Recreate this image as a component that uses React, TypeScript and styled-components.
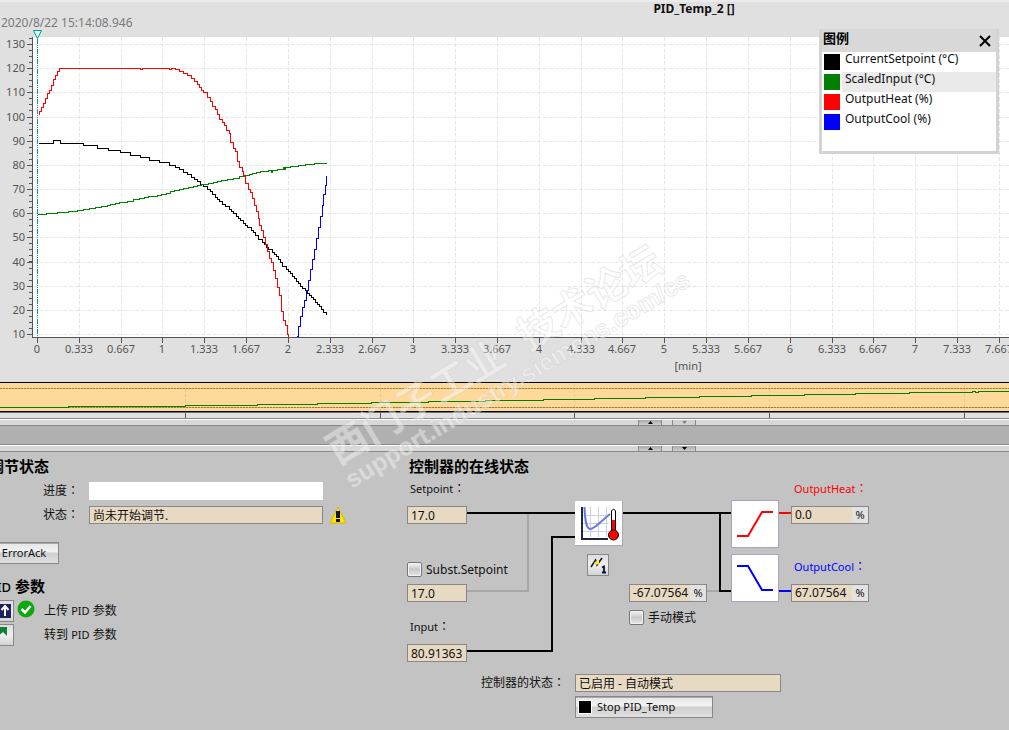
import React, { useState } from 'react';
import styled, { createGlobalStyle, css } from 'styled-components';

const latin = '"Noto Sans", "Open Sans", "Noto Sans CJK SC", sans-serif';
const lineGrey = '#888888';
const sand = '#e8d9c2';

const GlobalStyle = createGlobalStyle`
  *, *::before, *::after { box-sizing: border-box; }
  body {
    margin: 0;
    background: #c3c3c3;
    font-family: ${latin};
    font-size: 11px;
    line-height: 18px;
    color: #111;
    overflow-x: hidden;
  }
  button, input { font: inherit; color: inherit; }
`;

const Page = styled.main`
  position: relative;
  display: flex;
  flex-direction: column;
  min-height: 100vh;
  overflow: hidden;
`;

/* ---------- trend view ---------- */

const Trend = styled.section`
  position: relative;
  background: #e0e0e0;
  border-top: 2px solid #ebebeb;
`;

const TrendTitle = styled.h1`
  margin: 0;
  padding-left: 379px;
  height: 14px;
  font-size: 12px;
  line-height: 14px;
  font-weight: 700;
  text-align: center;
`;

const TimeStamp = styled.time`
  display: block;
  height: 14px;
  padding-left: 1px;
  font-size: 12px;
  line-height: 14px;
  color: #7a7a7a;
`;

const Plot = styled.svg`
  display: block;
  width: 100%;
  height: 328px;
  font-size: 11px;
  fill: #555;
  overflow: hidden;
`;

const AxisUnit = styled.div`
  height: 24px;
  padding-left: 367px;
  text-align: center;
  line-height: 16px;
  color: #555;
`;

const Legend = styled.aside`
  position: absolute;
  top: 27px;
  right: 10px;
  width: 180px;
  height: 125px;
  border: 3px solid #d3d3d3;
  border-top-width: 0;
  background: #fff;
`;

const LegendHeader = styled.header`
  display: flex;
  justify-content: space-between;
  align-items: flex-start;
  height: 23px;
  padding: 0 5px 0 1px;
  background: #d8d8d8;
`;

const LegendTitle = styled.h2`
  margin: 0;
  font-family: "Noto Sans CJK SC", sans-serif;
  font-size: 13px;
  line-height: 18px;
  font-weight: 700;
  color: #000;
`;

const CloseButton = styled.button`
  display: flex;
  padding: 6px 0 0;
  border: 0;
  background: none;
`;

const LegendList = styled.ul`
  margin: 0;
  padding: 0;
  list-style: none;
`;

const LegendRow = styled.li<{ $active?: boolean }>`
  display: flex;
  gap: 2px;
  height: 20px;
  padding-left: 2px;
  > span {
    flex: 1;
    padding-left: 3px;
    font-size: 12px;
    line-height: 14px;
    background: ${(p) => (p.$active ? '#eaeaea' : 'transparent')};
  }
`;

const Swatch = styled.i<{ $color: string }>`
  width: 16px;
  height: 16px;
  margin-top: 2px;
  background: ${(p) => p.$color};
`;

const Overview = styled.svg`
  display: block;
  width: 100%;
  height: 36px;
`;

/* ---------- splitters ---------- */

const Splitter = styled.div`
  display: flex;
  justify-content: center;
  gap: 10px;
  height: 8px;
  padding-left: 325px;
  border-top: 1px solid ${lineGrey};
  border-bottom: 1px solid ${lineGrey};
  background: #d8d8d8;
  box-shadow: inset 0 1px 0 #fff;
`;

const SplitterButton = styled.button`
  display: flex;
  align-items: center;
  justify-content: center;
  width: 24px;
  height: 5px;
  margin-top: 1px;
  padding: 0;
  border: solid ${lineGrey};
  border-width: 0 1px;
  background: linear-gradient(#a8a8a8, #d0d0d0);
  &:disabled { background: #d2d2d2; }
`;

const Band = styled.div`
  height: 18px;
  background: #b0b0b0;
`;

/* ---------- lower pane ---------- */

const Lower = styled.section`
  flex: 1;
  display: grid;
  grid-template-columns: 400px 1fr;
  align-items: start;
  padding: 4px 0 12px;
  background: #c3c3c3;
`;

const Tuning = styled.div`
  margin-left: -11px;
`;

const Heading = styled.h2<{ $indent?: number; $top?: number }>`
  margin: ${(p) => p.$top ?? 0}px 0 0;
  padding-left: ${(p) => p.$indent ?? 0}px;
  font-family: "Noto Sans", "Noto Sans CJK SC", sans-serif;
  font-size: 15px;
  line-height: 20px;
  height: 20px;
  font-weight: 700;
  color: #000;
  white-space: nowrap;
`;

const HeadingLatin = styled.span`
  font-size: 13px;
  font-weight: 500;
`;

const FormRow = styled.div`
  display: grid;
  grid-template-columns: 100px 234px auto;
  align-items: center;
  height: 18px;
  margin-top: 6px;
`;

const caption = css`
  font-family: "Noto Sans", "Noto Sans CJK SC", sans-serif;
  white-space: nowrap;
`;

const RowLabel = styled.label`
  ${caption}
  padding-left: 54px;
  font-size: 12px;
`;

const ColonMark = styled.span`
  font-family: "Noto Sans CJK TC", sans-serif;
  font-size: 12px;
  line-height: 12px;
`;

const Progress = styled.progress`
  appearance: none;
  display: block;
  width: 100%;
  height: 18px;
  border: 0;
  background: #fff;
  &::-webkit-progress-bar { background: #fff; }
  &::-webkit-progress-value { background: #0a8f0a; }
`;

const Field = styled.input`
  display: block;
  width: 100%;
  min-width: 0;
  height: 18px;
  padding: 0 3px;
  border: 1px solid ${lineGrey};
  border-radius: 0;
  outline: 0;
  background: ${sand};
  font-size: 12px;
  line-height: 16px;
`;

const UnitField = styled.div`
  display: flex;
  width: 78px;
  height: 18px;
  border: 1px solid ${lineGrey};
  background: #e2e2e2;
  ${Field} {
    height: 16px;
    padding-right: 0;
    border: 0;
  }
`;

const Unit = styled.span`
  flex: none;
  width: 16px;
  text-align: center;
  line-height: 16px;
`;

const Warning = styled.svg`
  margin-left: 6px;
`;

const PushButton = styled.button<{ $width: number; $top?: number }>`
  display: flex;
  align-items: center;
  justify-content: ${(p) => (p.$top ? 'center' : 'flex-start')};
  gap: 5px;
  width: ${(p) => p.$width}px;
  height: 22px;
  margin-top: ${(p) => p.$top ?? 0}px;
  padding: 0 2px;
  border: 1px solid ${lineGrey};
  background: linear-gradient(#e6e6e6 0%, #f2f2f2 45%, #cfcfcf 50%, #e0e0e0 100%);
  box-shadow: inset 0 1px 0 #a8a8a8;
  color: #111;
  line-height: 20px;
`;

const Actions = styled.div`
  display: grid;
  grid-template-columns: 25px 30px auto;
  align-items: center;
  row-gap: 2px;
  margin-top: 4px;
`;

const IconButton = styled.button`
  display: flex;
  align-items: center;
  justify-content: center;
  width: 100%;
  height: 22px;
  padding: 0;
  border: 1px solid ${lineGrey};
  background: linear-gradient(#dcdcdc, #f0f0f0 50%, #d2d2d2);
`;

const OkMark = styled.svg`
  align-self: start;
  justify-self: start;
  margin-left: 3px;
`;

const ActionText = styled.span`
  ${caption}
  font-size: 12px;
`;

const ActionLatin = styled.span`
  font-size: 11px;
`;

/* ---------- controller diagram ---------- */

const Diagram = styled.div`
  position: relative;
  height: 192px;
`;

const Wires = styled.svg`
  position: absolute;
  left: 0;
  top: 0;
`;

const Node = styled.div<{ $x: number; $y: number; $w?: number; $color?: string }>`
  position: absolute;
  left: ${(p) => p.$x}px;
  top: ${(p) => p.$y}px;
  width: ${(p) => (p.$w ? `${p.$w}px` : 'auto')};
  white-space: nowrap;
  color: ${(p) => p.$color ?? 'inherit'};
`;

const Block = styled.svg`
  display: block;
  background: #fff;
`;

const Check = styled.label`
  display: flex;
  align-items: center;
  gap: 4px;
  height: 15px;
  font-size: 12px;
  line-height: 14px;
`;

const CheckBox = styled.input`
  appearance: none;
  width: 15px;
  height: 15px;
  margin: 0;
  border: 1px solid #777;
  border-radius: 2px;
  background: linear-gradient(#f4f4f4, #c8c8c8 50%, #e8e8e8);
  box-shadow: inset 0 0 0 1px #f2f2f2;
  &:checked { background: #555; }
`;

const StatusGrid = styled.div`
  display: grid;
  grid-template-columns: 175px 206px;
  row-gap: 4px;
  margin-top: 6px;
`;

const StatusLabel = styled.label`
  ${caption}
  font-size: 12px;
  padding-left: 81px;
`;

const StopCell = styled.div`
  grid-column: 2;
`;

const Watermark = styled.div`
  position: absolute;
  left: 337px;
  top: 432px;
  transform: rotate(-31deg);
  transform-origin: 0 50%;
  pointer-events: none;
  white-space: nowrap;
  font-family: "Liberation Sans", "Noto Sans CJK SC", sans-serif;
  font-weight: 700;
  color: rgba(255, 255, 255, 0.42);
  -webkit-text-stroke: 1px rgba(205, 205, 205, 0.45);
`;

const MarkLine = styled.div<{ $size: number }>`
  font-size: ${(p) => p.$size}px;
  line-height: ${(p) => p.$size}px;
`;

/* ---------- data ---------- */

type Pt = [number, number];

// Points are screen positions inside the plot; the value is held until the next sample.
const stairs = (pts: Pt[]) =>
  pts.reduce((d, [x, y], i) => (i === 0 ? `M${x} ${y}` : `${d}H${x}V${y}`), '');

const heat: Pt[] = [
  [38, 114], [39, 111], [41, 107], [43, 103], [45, 98], [47, 93], [49, 90], [51, 85], [53, 79],
  [55, 75], [57, 71], [59, 68], [140, 69], [142, 68], [169, 69], [171, 68], [175, 69], [179, 71], [183, 73],
  [187, 75], [191, 78], [194, 81], [197, 84], [199, 87], [201, 90], [203, 92], [207, 97], [210, 101],
  [212, 106], [215, 109], [217, 114], [219, 119], [222, 122], [224, 125], [226, 130], [229, 133],
  [230, 142], [233, 148], [235, 151], [237, 161], [239, 167], [242, 171], [243, 175], [245, 183],
  [248, 189], [250, 192], [252, 198], [254, 205], [256, 211], [258, 218], [259, 225], [261, 230],
  [263, 237], [265, 244], [267, 251], [269, 258], [271, 262], [273, 270], [275, 278], [277, 287],
  [279, 295], [281, 311], [283, 320], [285, 325], [287, 334], [288, 337],
];
const cool: Pt[] = [
  [296, 336], [298, 326], [300, 316], [302, 307], [304, 300], [306, 290], [308, 280], [310, 269],
  [312, 259], [314, 249], [316, 238], [318, 227], [320, 216], [322, 205], [323, 194], [325, 185], [326, 175],
];
const setpoint: Pt[] = [
  [38, 143], [53, 140], [60, 143], [83, 145], [97, 148], [108, 150], [120, 152], [130, 155], [140, 157],
  [149, 160], [159, 162], [169, 165], [175, 167], [179, 169], [183, 172], [187, 174], [191, 177],
  [194, 179], [197, 181], [200, 184], [203, 186], [207, 189], [210, 191], [212, 194], [215, 197],
  [217, 199], [219, 201], [222, 204], [225, 206], [229, 209], [231, 211], [233, 213], [236, 216],
  [238, 218], [240, 220], [243, 223], [245, 225], [247, 227], [251, 230], [253, 232], [255, 235],
  [258, 239], [262, 242], [264, 244], [266, 247], [268, 249], [272, 252], [274, 254], [276, 256],
  [278, 259], [280, 262], [282, 266], [286, 269], [288, 271], [290, 273], [292, 276], [294, 278],
  [296, 281], [298, 283], [300, 286], [302, 288], [305, 290], [307, 293], [309, 295], [311, 297],
  [313, 299], [315, 302], [317, 304], [319, 306], [321, 309], [323, 312], [326, 314],
];
const scaledInput: Pt[] = [
  [37, 214], [46, 213], [57, 212], [68, 211], [77, 210], [83, 209], [89, 208], [95, 207], [101, 206],
  [107, 205], [110, 204], [115, 203], [119, 202], [127, 201], [133, 199], [139, 198], [144, 197],
  [148, 196], [157, 195], [161, 194], [166, 193], [170, 191], [174, 190], [179, 189], [183, 188],
  [188, 187], [193, 186], [197, 185], [201, 184], [208, 183], [213, 182], [217, 181], [221, 180],
  [227, 179], [233, 178], [239, 176], [245, 175], [249, 174], [252, 173], [256, 172], [260, 171],
  [268, 170], [271, 172], [272, 170], [277, 169], [283, 167], [284, 169], [285, 167], [290, 166],
  [298, 165], [305, 164], [314, 163], [326, 162],
];
const history: Pt[] = [
  [0, 25], [68, 24], [185, 23], [257, 22], [317, 21], [371, 20], [428, 19], [485, 18], [543, 17],
  [594, 16], [645, 15], [699, 14], [751, 13], [804, 12], [855, 11], [909, 10], [972, 9], [975, 10], [978, 9],
];

// The plot starts 30px below the top of the view.
const plotTop = 30;
const xTicks = Array.from({ length: 24 }, (_, i) => ({
  x: Math.round(37 + i * 41.82),
  label: String(Number((i / 3).toFixed(3))),
}));
const yTicks = Array.from({ length: 13 }, (_, i) => ({
  y: Math.round(44 + i * 24.17) - plotTop,
  label: String(130 - i * 10),
}));
const minorTicks = Array.from({ length: 49 }, (_, i) => Math.round(38 + i * 6.04) - plotTop);

const legend = [
  { name: 'CurrentSetpoint (°C)', color: '#000000' },
  { name: 'ScaledInput (°C)', color: '#008000', active: true },
  { name: 'OutputHeat (%)', color: '#ff0000' },
  { name: 'OutputCool (%)', color: '#0000ff' },
];

/* ---------- pieces ---------- */

const Colon = () => <ColonMark>：</ColonMark>;

const TrendPlot = () => (
  <Plot role="img" aria-label="PID trend">
    <rect x="33" y="7" width="100%" height="300" fill="#fff" />
    <g stroke="#e6e6e6" strokeDasharray="4 2" shapeRendering="crispEdges">
      {xTicks.slice(1).map((t) => (
        <line key={t.x} x1={t.x + 0.5} x2={t.x + 0.5} y1="7" y2="307" />
      ))}
      {yTicks.map((t) => (
        <line key={t.y} x1="33" x2="100%" y1={t.y + 0.5} y2={t.y + 0.5} />
      ))}
    </g>
    <g stroke="#555" shapeRendering="crispEdges">
      <line x1="32.5" x2="32.5" y1="7" y2="308" />
      <line x1="32" x2="100%" y1="307.5" y2="307.5" />
      {yTicks.map((t) => (
        <line key={t.y} x1="27" x2="32" y1={t.y + 0.5} y2={t.y + 0.5} />
      ))}
      {minorTicks.map((y) => (
        <line key={y} x1="29" x2="32" y1={y + 0.5} y2={y + 0.5} />
      ))}
      {xTicks.map((t) => (
        <line key={t.x} x1={t.x + 0.5} x2={t.x + 0.5} y1="308" y2="313" />
      ))}
    </g>
    <g textAnchor="end">
      {yTicks.map((t) => (
        <text key={t.label} x="25" y={t.y + 4}>{t.label}</text>
      ))}
    </g>
    <g textAnchor="middle">
      {xTicks.map((t) => (
        <text key={t.label} x={t.x} y="323">{t.label}</text>
      ))}
    </g>
    <g fill="none" shapeRendering="crispEdges" transform={`translate(0.5 ${0.5 - plotTop})`}>
      <path d={stairs(setpoint)} stroke="#000" />
      <path d={stairs(scaledInput)} stroke="#008000" />
      <path d={stairs(heat)} stroke="#ff0000" />
      <path d={stairs(cool)} stroke="#0000ff" />
    </g>
    <line x1="37.5" x2="37.5" y1="9" y2="307" stroke="#009a9a" strokeDasharray="5 1 1 1 1 1" shapeRendering="crispEdges" />
    <path d="M33.5 0.5H41.5L37.5 8.5Z" fill="#e8ffff" stroke="#009a9a" />
  </Plot>
);

const OverviewStrip = () => (
  <Overview role="img" aria-label="Recorded range">
    <rect width="100%" height="30" fill="#000" />
    <rect y="1" width="100%" height="28" fill="#ffd999" />
    <g shapeRendering="crispEdges">
      <line x2="100%" y1="6.5" y2="6.5" stroke="#d8b070" />
      <line x2="100%" y1="6.5" y2="6.5" stroke="#a07c40" strokeDasharray="2 1" />
      <line x2="100%" y1="25.5" y2="25.5" stroke="#d8b070" />
      <line x2="100%" y1="25.5" y2="25.5" stroke="#a07c40" strokeDasharray="2 1" />
      <line x2="100%" y1="30.5" y2="30.5" stroke="#707070" />
      {[185, 380, 574, 769, 964].map((x) => (
        <g key={x}>
          <line x1={x + 0.5} x2={x + 0.5} y1="2" y2="28" stroke="#ebc98c" strokeDasharray="3 2" />
          <line x1={x + 0.5} x2={x + 0.5} y1="31" y2="36" stroke="#555" />
        </g>
      ))}
      <path d={`${stairs(history)}H4000`} transform="translate(0 0.5)" fill="none" stroke="#008000" />
    </g>
  </Overview>
);

const SplitBar = ({ downDisabled }: { downDisabled?: boolean }) => (
  <Splitter>
    <SplitterButton aria-label="Collapse up">
      <svg width="5" height="3"><path d="M0 3L2.5 0L5 3Z" fill="#000" /></svg>
    </SplitterButton>
    <SplitterButton aria-label="Collapse down" disabled={downDisabled}>
      <svg width="5" height="3"><path d="M0 0H5L2.5 3Z" fill={downDisabled ? '#808080' : '#000'} /></svg>
    </SplitterButton>
  </Splitter>
);

const ControllerBlock = () => (
  <Block width="48" height="45" viewBox="0 0 48 45">
    <rect x="0.5" y="0.5" width="47" height="44" fill="#fff" stroke="#a8a8b8" />
    <path d="M0.5 44V0.5H47" fill="none" stroke="#fff" />
    <path d="M15.5 6V36M23.5 6V36M31.5 6V36M8 14.5H34M8 22.5H34M8 30.5H34" stroke="#c8cfe6" fill="none" />
    <path d="M7 6V38H33" fill="none" stroke="#20263f" strokeWidth="2" />
    <path d="M9.5 6C10 19 11 27 15 28C20 28 25 21 35 13" fill="none" stroke="#6a78e0" strokeWidth="2" />
    <path d="M36.5 30V10Q38.500 6.500 40.500 10V30" fill="#fff" stroke="#000" />
    <rect x="37" y="19" width="3" height="13" fill="#f00" />
    <circle cx="38.500" cy="34" r="5" fill="#f00" stroke="#000" />
  </Block>
);

const LimitBlock = ({ kind }: { kind: 'heat' | 'cool' }) => (
  <Block width="48" height="48" viewBox="0 0 48 48">
    <rect x="0.5" y="0.5" width="47" height="47" fill="#fff" stroke="#a5a5bb" />
    <path
      d={kind === 'heat' ? 'M6 36H17L31 12H42' : 'M6 12H17L31 36H42'}
      fill="none"
      stroke={kind === 'heat' ? '#f00' : '#00f'}
      strokeWidth="2"
    />
  </Block>
);

const ValueWithUnit = ({ id, value, label }: { id: string; value: string; label?: string }) => (
  <UnitField>
    <Field id={id} value={value} aria-label={label} readOnly />
    <Unit>%</Unit>
  </UnitField>
);

export default function App() {
  const [legendOpen, setLegendOpen] = useState(true);

  return (
    <Page>
      <GlobalStyle />
      <Trend>
        <TrendTitle>PID_Temp_2 []</TrendTitle>
        <TimeStamp>2020/8/22 15:14:08.946</TimeStamp>
        <TrendPlot />
        <AxisUnit>[min]</AxisUnit>
        <OverviewStrip />
        {legendOpen && (
          <Legend>
            <LegendHeader>
              <LegendTitle>图例</LegendTitle>
              <CloseButton aria-label="Close legend" onClick={() => setLegendOpen(false)}>
                <svg width="12" height="12" viewBox="0 0 12 12">
                  <path d="M1 1L11 11M11 1L1 11" stroke="#000" strokeWidth="2" />
                </svg>
              </CloseButton>
            </LegendHeader>
            <LegendList>
              {legend.map((item) => (
                <LegendRow key={item.name} $active={item.active}>
                  <Swatch $color={item.color} />
                  <span>{item.name}</span>
                </LegendRow>
              ))}
            </LegendList>
          </Legend>
        )}
      </Trend>

      <SplitBar downDisabled />
      <Band />
      <SplitBar />

      <Lower>
        <Tuning>
          <Heading>调节状态</Heading>
          <FormRow>
            <RowLabel htmlFor="progress">进度<Colon /></RowLabel>
            <Progress id="progress" value={0} max={100} />
          </FormRow>
          <FormRow>
            <RowLabel htmlFor="tuning-state">状态<Colon /></RowLabel>
            <Field id="tuning-state" value="尚未开始调节." readOnly />
            <Warning width="18" height="18" viewBox="0 0 18 18" role="img" aria-label="Warning">
              <path d="M9 1L17 17H1Z" fill="#ffe600" stroke="#d8b400" strokeLinejoin="round" />
              <rect x="7" y="5" width="4" height="7" fill="#101040" />
              <rect x="7" y="13" width="4" height="3" fill="#101040" />
            </Warning>
          </FormRow>
          <PushButton $width={70} $top={18}>ErrorAck</PushButton>

          <Heading $top={12}><HeadingLatin>PID</HeadingLatin> 参数</Heading>
          <Actions>
            <IconButton aria-label="上传 PID 参数">
              <svg width="23" height="20" viewBox="0 0 23 20">
                <rect x="6" y="3" width="15" height="14" fill="#1c2260" />
                <path d="M15 15V6M11.500 9L15 5L18.500 9" fill="none" stroke="#fff" strokeWidth="2" />
              </svg>
            </IconButton>
            <OkMark width="18" height="18" viewBox="0 0 18 18" role="img" aria-label="OK">
              <circle cx="9" cy="9" r="8.500" fill="#0ea80e" />
              <path d="M4.500 9L8 12.500L13.500 6" fill="none" stroke="#fff" strokeWidth="2.500" />
            </OkMark>
            <ActionText>上传 <ActionLatin>PID</ActionLatin> 参数</ActionText>
            <IconButton aria-label="转到 PID 参数">
              <svg width="23" height="20" viewBox="0 0 23 20">
                <path d="M8 2H17V11L13 7L8 11Z" fill="#14803c" />
              </svg>
            </IconButton>
            <span />
            <ActionText>转到 <ActionLatin>PID</ActionLatin> 参数</ActionText>
          </Actions>
        </Tuning>

        <div>
          <Heading $indent={9}>控制器的在线状态</Heading>
          <Diagram>
            <Wires width="480" height="192" viewBox="0 0 480 192" fill="none" strokeWidth="2">
              <path d="M67 115H128V38M307 115H320" stroke="#a8a8a8" />
              <path d="M67 37H175M67 175H152V61H175M223 37H331M320 37V115H331" stroke="#000" />
              <path d="M379 37H391" stroke="#f00" />
              <path d="M379 115H391" stroke="#00f" />
            </Wires>

            <Node $x={10} $y={4}><label htmlFor="setpoint">Setpoint<Colon /></label></Node>
            <Node $x={7} $y={30} $w={60}><Field id="setpoint" value="17.0" readOnly /></Node>
            <Node $x={7} $y={86}>
              <Check><CheckBox type="checkbox" />Subst.Setpoint</Check>
            </Node>
            <Node $x={7} $y={108} $w={60}>
              <Field aria-label="Subst.Setpoint value" value="17.0" readOnly />
            </Node>
            <Node $x={10} $y={142}><label htmlFor="input">Input<Colon /></label></Node>
            <Node $x={7} $y={168} $w={60}><Field id="input" value="80.91363" readOnly /></Node>

            <Node $x={175} $y={25}><ControllerBlock /></Node>
            <Node $x={187} $y={78} $w={22}>
              <IconButton aria-label="Trend 1">
                <svg width="20" height="20" viewBox="0 0 20 20">
                  <path d="M3 12L7.500 5L9 10L14 3" fill="none" stroke="#101040" strokeWidth="1.500" />
                  <path d="M6.500 7L11 5V9L7.500 10Z" fill="#ffee00" />
                  <path d="M14 12.500L16 11.500V18M14 17.500H18" fill="none" stroke="#101040" strokeWidth="1.800" />
                </svg>
              </IconButton>
            </Node>

            <Node $x={229} $y={108}>
              <ValueWithUnit id="manual" value="-67.07564" label="Manual output" />
            </Node>
            <Node $x={229} $y={134}>
              <Check><CheckBox type="checkbox" />手动模式</Check>
            </Node>

            <Node $x={331} $y={24}><LimitBlock kind="heat" /></Node>
            <Node $x={331} $y={78}><LimitBlock kind="cool" /></Node>

            <Node $x={394} $y={4} $color="#ff0000"><label htmlFor="heat">OutputHeat<Colon /></label></Node>
            <Node $x={391} $y={30}><ValueWithUnit id="heat" value="0.0" /></Node>
            <Node $x={394} $y={82} $color="#0000ff"><label htmlFor="cool">OutputCool<Colon /></label></Node>
            <Node $x={391} $y={108}><ValueWithUnit id="cool" value="67.07564" /></Node>
          </Diagram>

          <StatusGrid>
            <StatusLabel htmlFor="state">控制器的状态<Colon /></StatusLabel>
            <Field id="state" value="已启用 - 自动模式" readOnly />
            <StopCell>
              <PushButton $width={138}>
                <svg width="14" height="14" viewBox="0 0 14 14">
                  <rect x="0.5" y="0.5" width="13" height="13" fill="#000" stroke="#fff" />
                </svg>
                Stop PID_Temp
              </PushButton>
            </StopCell>
          </StatusGrid>
        </div>
      </Lower>

      <Watermark aria-hidden="true">
        <MarkLine $size={40}>西门子工业&nbsp; 技术论坛</MarkLine>
        <MarkLine $size={25}>support.industry.siemens.com/cs</MarkLine>
      </Watermark>
    </Page>
  );
}
